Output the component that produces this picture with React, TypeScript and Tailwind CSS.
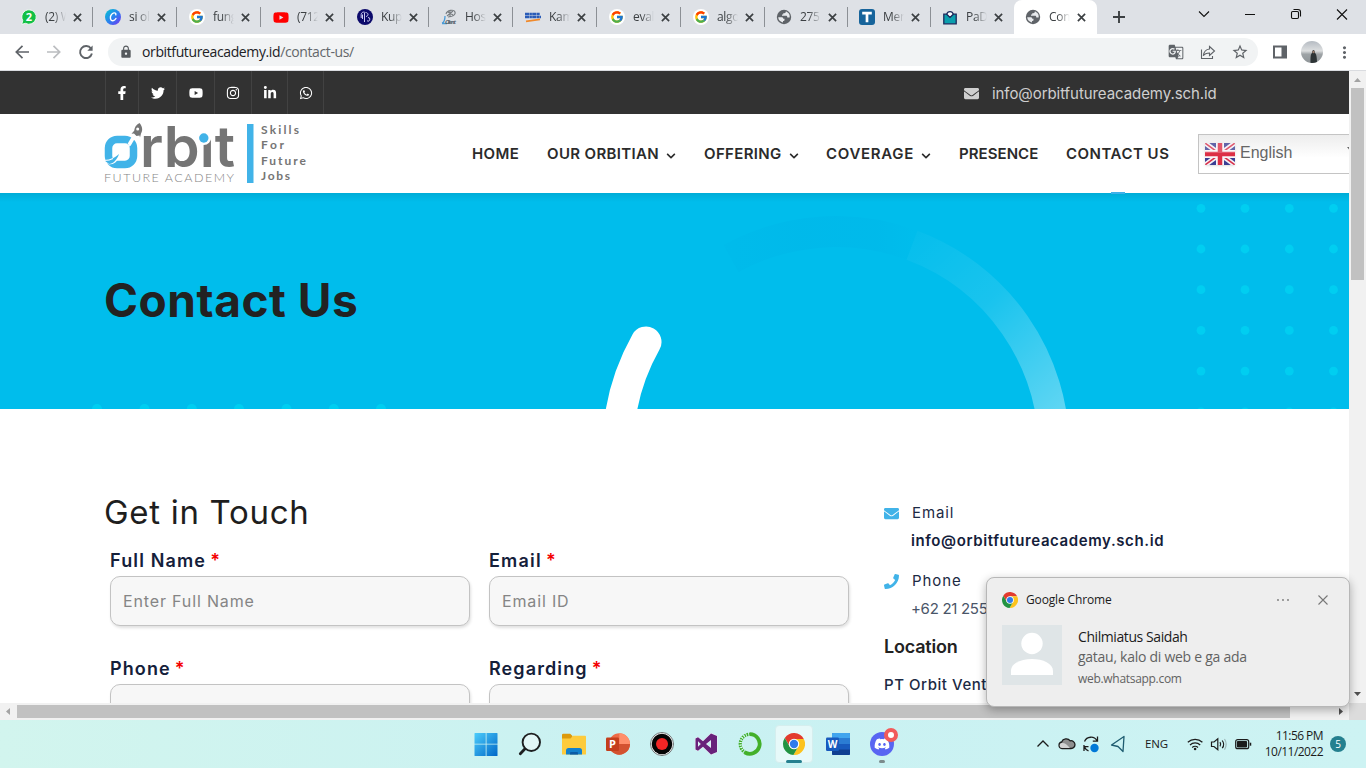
import React from "react";
import {
  FaFacebookF,
  FaTwitter,
  FaYoutube,
  FaInstagram,
  FaLinkedinIn,
  FaWhatsapp,
  FaEnvelope,
  FaPhone,
  FaChevronDown,
  FaDiscord,
} from "react-icons/fa";
import { FcGoogle } from "react-icons/fc";
import { MdLock, MdGTranslate, MdStarBorder, MdMoreVert } from "react-icons/md";

const UI = "font-['Open_Sans','Noto_Sans',sans-serif]";
const SITE = "font-['Inter','Liberation_Sans',sans-serif]";

/* ---------- shared icons ---------- */

function ChromeLogo({ className }: { className: string }) {
  return (
    <svg viewBox="2 2 44 44" className={className}>
      <path fill="#e33b2e" d="M5.55 12.02A22 22 0 0 1 43.6 14H24L15.34 29Z" />
      <path fill="#fcc31e" d="M43.6 14A22 22 0 0 1 22.85 45.97L32.66 29 24 14Z" />
      <path fill="#229342" d="M22.85 45.97A22 22 0 0 1 5.55 12.02L15.34 29H32.66Z" />
      <circle cx="24" cy="24" r="10.5" fill="#fff" />
      <circle cx="24" cy="24" r="8.3" fill="#2f7bea" />
    </svg>
  );
}

function GlobeIcon() {
  return (
    <svg viewBox="0 0 16 16" className="size-4">
      <circle cx="8" cy="8" r="7.2" fill="#5f6368" />
      <path
        d="M2.200 8.200h3.300c1.200 0 1.800.7 1.800 1.600h1.200v1.300c0 .8-.7 1-1.500 1v1.300C4.500 13 2.300 11 2.200 8.200Z"
        fill="#e8eaed"
      />
      <path
        d="M9.800 2.600c0 1.200-.5 1.700-1.500 1.700H7.200v1.300H6v1.200h4c1 0 1.300.6 1.300 1.600h2.300c.6-2.600-1-5-3.800-5.800Z"
        fill="#e8eaed"
      />
    </svg>
  );
}

function GoogleIcon() {
  return (
    <span className="flex size-4 items-center justify-center rounded-full bg-white">
      <FcGoogle size={14} />
    </span>
  );
}

/* ---------- browser tabs ---------- */

const tabs: { label: string; icon: React.ReactNode }[] = [
  {
    label: "(2) WhatsApp",
    icon: (
      <svg viewBox="0 0 16 16" className="size-4">
        <path d="M8 .8a7.200 7.200 0 1 1-3.500 13.500L.8 15.300l1-3.700A7.200 7.200 0 0 1 8 .8Z" fill="#12bf45" stroke="#fff" strokeWidth=".8" />
        <text x="8" y="12" textAnchor="middle" fontSize="11" fontWeight="700" fill="#fff">2</text>
      </svg>
    ),
  },
  {
    label: "si olive",
    icon: (
      <svg viewBox="0 0 16 16" className="size-4">
        <defs>
          <linearGradient id="canva" x1="0" y1="0" x2="1" y2="1">
            <stop offset="0" stopColor="#04c6d0" />
            <stop offset=".55" stopColor="#2e7df0" />
            <stop offset="1" stopColor="#7a2ff0" />
          </linearGradient>
        </defs>
        <circle cx="8" cy="8" r="8" fill="url(#canva)" />
        <path d="M10.800 5.800c.3-1.400-.6-2.100-1.800-1.900-2.300.4-3.900 3-3.600 5.300.2 1.700 1.200 2.700 2.600 2.500 1.200-.1 2.300-1 2.900-2.200" fill="none" stroke="#fff" strokeWidth="1.400" strokeLinecap="round" />
      </svg>
    ),
  },
  { label: "fungsi", icon: <GoogleIcon /> },
  { label: "(712) You", icon: <FaYoutube size={17} className="text-[#ff0000]" /> },
  {
    label: "Kupas",
    icon: (
      <svg viewBox="0 0 16 16" className="size-4">
        <circle cx="8" cy="8" r="8" fill="#0c0a6b" />
        <path d="M5.500 10V5.500M7.500 3.500v9.500M4.200 9V5.500C4.200 3.500 6 3 7.500 3M8.500 3.500c3 0 3.500 3.500 .5 4M11 8.500a1.800 1.800 0 1 1-1 3.300" fill="none" stroke="#c8c9ef" strokeWidth="1" />
      </svg>
    ),
  },
  {
    label: "Hospital",
    icon: (
      <svg viewBox="0 0 16 16" className="size-4">
        <path d="M5 5c1-4 8-5 9-2s-3 5-7 5M7 3l5 3M6 7l6-5M9 2v6" fill="none" stroke="#777c80" strokeWidth="1.100" />
        <path d="M1 14c3-1 3-5 3-7M1 14.500h5" fill="none" stroke="#4a9bd8" strokeWidth="1.300" />
        <text x="4" y="14.500" fontSize="6" fontStyle="italic" fontWeight="700" fill="#55606a" textLength="11">Client</text>
      </svg>
    ),
  },
  {
    label: "Kampus",
    icon: (
      <svg viewBox="0 0 16 16" className="size-4">
        <path d="M0 5h15M0 8h16" stroke="#2a5cb8" strokeWidth="2.400" strokeDasharray="4 .4 2.500 .3" />
        <path d="M1 12.300 15 10.300" stroke="#f08a2c" strokeWidth="1.800" />
      </svg>
    ),
  },
  { label: "evaluasi", icon: <GoogleIcon /> },
  { label: "algoritma", icon: <GoogleIcon /> },
  { label: "275 0", icon: <GlobeIcon /> },
  {
    label: "Menu",
    icon: (
      <svg viewBox="0 0 16 16" className="size-4">
        <rect width="16" height="16" rx="3" fill="#17649b" />
        <path d="M3.200 4.200h9.600M8 4v9.200" stroke="#fff" strokeWidth="2.700" />
      </svg>
    ),
  },
  {
    label: "PaDi",
    icon: (
      <svg viewBox="0 0 16 16" className="size-4">
        <path d="M1.800 5.200h3L8 8.200l3.200-3h3v9.600H1.800Z" fill="#0b9fae" stroke="#1b2a5c" strokeWidth="1.300" />
        <path d="M4.800 5.200a3.300 3.300 0 0 1 6.400 0L8 8.400Z" fill="#fff" stroke="#1b2a5c" strokeWidth="1.300" />
      </svg>
    ),
  },
  { label: "Contact", icon: <GlobeIcon /> },
];

function TabStrip() {
  return (
    <div className={`flex h-[34px] shrink-0 bg-[#dee1e6] pl-[9px] ${UI}`}>
      {tabs.map((t, i) => {
        const active = i === tabs.length - 1;
        const sep = i < tabs.length - 2;
        return (
          <div
            key={i}
            className={`relative flex h-[34px] shrink-0 items-center ${i < 9 ? "w-[84px] pl-3" : "w-[83px] pl-[11px]"} ${active ? "rounded-t-lg bg-white" : ""}`}
          >
            <span className="flex w-4 shrink-0 justify-center">{t.icon}</span>
            <span className="ml-2 w-[21px] overflow-hidden text-[12px] tracking-[-0.3px] whitespace-nowrap text-[#3c4043] [mask-image:linear-gradient(90deg,#000_40%,transparent)]">
              {t.label}
            </span>
            <svg viewBox="0 0 10 10" className="ml-[7px] size-[9px]">
              <path d="M1 1l8 8M9 1 1 9" stroke="#3c4043" strokeWidth="1.900" />
            </svg>
            {sep && <span className="absolute top-[7px] right-0 h-5 w-px bg-[#8c9095]" />}
          </div>
        );
      })}
      <svg viewBox="0 0 14 14" className="mt-[10px] ml-[15px] size-[14px]">
        <path d="M7 1v12M1 7h12" stroke="#3c4043" strokeWidth="1.900" />
      </svg>
      <svg viewBox="0 0 170 20" className="mt-[5px] ml-[67px] h-5 w-[170px]" fill="none" stroke="#111" strokeWidth="1.100">
        <path d="M6 6.500 11 11.500 16 6.500M52 9.500h10" />
        <rect x="98.500" y="6.500" width="7" height="7" rx="1.200" />
        <path d="M100.500 4.500h4.500a2.500 2.500 0 0 1 2.500 2.500v4.500" />
        <path d="M144 4.500l10 10M154 4.500l-10 10" />
      </svg>
    </div>
  );
}

function Toolbar() {
  return (
    <div className={`flex h-[37px] shrink-0 items-center border-b border-[#dadce0] bg-white ${UI}`}>
      <svg viewBox="0 0 96 20" className="h-5 w-24 shrink-0" fill="none" strokeWidth="1.700">
        <path d="M29 10H16.500M22.500 3.800 16.300 10l6.200 6.200" stroke="#5f6368" />
        <path d="M47 10h12.500M53.500 3.800 59.700 10l-6.200 6.200" stroke="#bbbdc0" />
        <path d="M91 6.600a6 6 0 1 0 .9 4.900" stroke="#5f6368" strokeWidth="1.900" />
        <path d="M92.600 3.500v5.300h-5.300Z" fill="#5f6368" />
      </svg>
      <div className="ml-3 flex h-7 w-[1150px] shrink-0 items-center rounded-full bg-[#f1f3f4] pr-[9px] pl-[11px]">
        <MdLock size={14} className="text-[#55595d]" />
        <span className="ml-[9px] text-[14px] leading-5 tracking-[-0.38px] text-[#202124]">
          orbitfutureacademy.id<span className="text-[#63676b]">/contact-us/</span>
        </span>
        <MdGTranslate size={16} className="ml-auto text-[#5f6368]" />
        <svg viewBox="0 0 16 16" className="ml-[16px] size-4" fill="none" stroke="#5f6368" strokeWidth="1.100">
          <path d="M1.500 5.500v9h11v-2.500" />
          <path d="M9.500 2.500 14.500 7l-5 4.500V9c-3 0-5 .8-6.200 2.800C3.800 8 6 5.400 9.500 5Z" />
        </svg>
        <MdStarBorder size={18} className="ml-[15px] text-[#5f6368]" />
      </div>
      <svg viewBox="0 0 14 14" className="ml-[15px] size-[14px]">
        <path d="M0 .5h14v13H0ZM2 2.500v9h6.500v-9Z" fill="#5f6368" fillRule="evenodd" />
      </svg>
      <svg viewBox="0 0 22 22" className="ml-[14px] size-[22px]">
        <defs>
          <linearGradient id="avatarSky" x1="0" y1="0" x2="0" y2="1">
            <stop offset="0" stopColor="#b5bbc2" />
            <stop offset=".45" stopColor="#dddfe0" />
            <stop offset=".6" stopColor="#9ea3a6" />
            <stop offset="1" stopColor="#8f9598" />
          </linearGradient>
          <clipPath id="avatarClip"><circle cx="11" cy="11" r="11" /></clipPath>
        </defs>
        <g clipPath="url(#avatarClip)">
          <rect width="22" height="22" fill="url(#avatarSky)" />
          <path d="M9.500 22c0-6 0-9 1.500-10 0-4 3-4 3 0 1.500 1 2 5 2 10Z" fill="#2d3436" />
          <circle cx="12.500" cy="11" r="1.200" fill="#9b7e70" />
        </g>
      </svg>
      <MdMoreVert size={19} className="ml-[12px] text-[#5f6368]" />
    </div>
  );
}

/* ---------- site ---------- */

const socials = [
  { Icon: FaFacebookF, box: "w-[33px]" },
  { Icon: FaTwitter, box: "w-[38px]" },
  { Icon: FaYoutube, box: "w-[38px]" },
  { Icon: FaInstagram, box: "w-[37px]" },
  { Icon: FaLinkedinIn, box: "w-[36px]" },
  { Icon: FaWhatsapp, box: "w-[36px]" },
];

function TopBar() {
  return (
    <div className="flex h-[43px] shrink-0 items-center bg-[#323232] pl-[105px]">
      {socials.map(({ Icon, box }, i) => (
        <span key={i} className={`flex h-full items-center justify-center border-l border-[#424242] text-white ${box}`}>
          <Icon size={14} />
        </span>
      ))}
      <span className="h-full w-px bg-[#424242]" />
      <FaEnvelope size={15} className="mt-px ml-[640px] text-[#cfcfcf]" />
      <span className="ml-[13px] pt-[3px] text-[15px] tracking-[-0.07px] text-[#cfcfcf]">info@orbitfutureacademy.sch.id</span>
    </div>
  );
}

function Logo() {
  return (
    <svg viewBox="0 0 204 64" className="-ml-px h-16 w-[204px] shrink-0">
      <rect x="4.500" y="17.500" width="25" height="25" rx="8.500" fill="none" stroke="#41b3e8" strokeWidth="7.500" />
      <path d="M25 23 32 11" stroke="#fff" strokeWidth="3.500" />
      <path d="M26 22c-2 4-4 6-6 8" stroke="#fff" strokeWidth="1.500" fill="none" />
      <path d="M0 39.500c7 0 10-2 16-7-2 7-6 10-11 10Z" fill="#fff" />
      <path d="M0 38c7 0 10-2 15-6-2 6-6 10-10 10Z" fill="#41b3e8" />
      <path d="M0 38.500c4 0 7-.8 9-2" stroke="#fff" strokeWidth="1.200" fill="none" />
      <path d="M35.500 1c-3.500 1.500-5 4.500-5.300 7.800l-2.700 3 2.500-.3L32.500 14l3-.5.500 2 1-4c2-3 1.500-7-1.500-10.500Z" fill="#757575" />
      <circle cx="33.700" cy="7" r="1.500" fill="#fff" />
      <text x="36" y="45" fontSize="57" fontWeight="600" fontFamily="Inter" fill="#757575" textLength="95" lengthAdjust="spacingAndGlyphs">rbit</text>
      <rect x="90" y="0" width="18" height="12" fill="#fff" />
      <circle cx="99.800" cy="15.500" r="7.500" fill="#fff" />
      <circle cx="99.800" cy="16" r="4.700" fill="#41b3e8" />
      <text x="0" y="60" fontSize="12.500" fontWeight="300" fontFamily="Lato" fill="#858585" textLength="130">FUTURE ACADEMY</text>
      <rect x="143" y="2" width="6.500" height="59" fill="#41b3e8" />
      <g fontSize="12" fontFamily="Lato" fontWeight="700" fill="#757575">
        <text x="157" y="12" textLength="38">Skills</text>
        <text x="157" y="27" textLength="23">For</text>
        <text x="157" y="43" textLength="45">Future</text>
        <text x="157" y="58" textLength="29">Jobs</text>
      </g>
    </svg>
  );
}

const nav = [
  { label: "HOME", box: "w-[75px]", track: "tracking-[0.4px]", menu: false },
  { label: "OUR ORBITIAN", box: "w-[157px]", track: "tracking-[0.35px]", menu: true },
  { label: "OFFERING", box: "w-[122px]", track: "tracking-[0.35px]", menu: true },
  { label: "COVERAGE", box: "w-[133px]", track: "tracking-[0.7px]", menu: true },
  { label: "PRESENCE", box: "w-[107px]", track: "tracking-[0.05px]", menu: false },
  { label: "CONTACT US", box: "w-[132px]", track: "tracking-[0.5px]", menu: false },
];

function Flag() {
  return (
    <svg viewBox="0 0 30 22" className="h-[22px] w-[30px] shrink-0 rounded-[1px] shadow-sm">
      <rect width="30" height="22" fill="#3b3f94" />
      <path d="M0 0 30 22M30 0 0 22" stroke="#f4f1f6" strokeWidth="5" />
      <path d="M0 0 30 22M30 0 0 22" stroke="#d8304a" strokeWidth="1.500" />
      <path d="M15 0v22M0 11h30" stroke="#f8f5f8" strokeWidth="8" />
      <path d="M15 0v22M0 11h30" stroke="#dc2e45" strokeWidth="4.500" />
      <rect width="30" height="10" fill="#fff" opacity=".2" />
    </svg>
  );
}

function Header() {
  return (
    <div className="flex h-[79px] shrink-0 items-center bg-white pl-[105px]">
      <Logo />
      <nav className="ml-[164px] flex">
        {nav.map((n) => (
          <span key={n.label} className={`relative flex h-[79px] items-center pt-[2px] text-[15px] font-semibold whitespace-nowrap text-[#2b2b2b] ${n.box}`}>
            <span className={n.track}>{n.label}</span>
            {n.menu && <FaChevronDown size={10} className="mt-[2px] ml-[7px]" />}
            {n.label === "CONTACT US" && <span className="absolute bottom-[-1px] left-[45px] z-10 h-[2px] w-[14px] bg-[#3fb1ea]" />}
          </span>
        ))}
      </nav>
      <div className="flex h-10 flex-1 items-center overflow-hidden border border-r-0 border-[#c4c4c4] bg-linear-to-b from-[#ededed] to-white to-60% pl-[6px]">
        <Flag />
        <span className="ml-[5px] pb-[2px] font-['Liberation_Sans',Arial,sans-serif] text-[16px] text-[#666]">English</span>
        <svg viewBox="0 0 8 5" className="mr-[-6px] mb-2 ml-auto h-[5px] w-2 shrink-0"><path d="M0 0h8L4 5Z" fill="#666" /></svg>
      </div>
    </div>
  );
}

const dotX = [1201, 1245, 1289.3, 1333.5];
const dotY = [15.3, 56, 96.7, 137.4, 178.1, 218.8];
const lowDotX = [97, 144.5, 191.8, 239, 286.5, 333.8, 381];

function Hero() {
  return (
    <div className="relative h-[216px] shrink-0 overflow-hidden bg-[#00bdec]">
      <svg viewBox="0 0 1349 216" className="absolute inset-0 h-full w-full">
        <defs>
          <linearGradient id="ring" gradientUnits="userSpaceOnUse" x1="905" y1="45" x2="1060" y2="216">
            <stop offset="0" stopColor="#fff" stopOpacity=".02" />
            <stop offset=".45" stopColor="#fff" stopOpacity=".1" />
            <stop offset="1" stopColor="#fff" stopOpacity=".37" />
          </linearGradient>
          <linearGradient id="ringDark" gradientUnits="userSpaceOnUse" x1="725" y1="0" x2="915" y2="0">
            <stop offset="0" stopColor="#00b7e9" stopOpacity=".3" />
            <stop offset=".4" stopColor="#00b7e9" stopOpacity=".6" />
            <stop offset=".8" stopColor="#00b7e9" stopOpacity=".5" />
            <stop offset="1" stopColor="#00b7e9" stopOpacity="0" />
          </linearGradient>
          <linearGradient id="topShade" x1="0" y1="0" x2="0" y2="1">
            <stop offset="0" stopColor="#000" stopOpacity=".09" />
            <stop offset="1" stopColor="#000" stopOpacity="0" />
          </linearGradient>
        </defs>
        <path d="M731 65.600A218 218 0 0 1 912 52.300" fill="none" stroke="url(#ringDark)" strokeWidth="31" />
        <path d="M912 52.300A218 218 0 0 1 1054 256.500" fill="none" stroke="url(#ring)" strokeWidth="31" />
        <path d="M618 256.500A218 218 0 0 1 646 149" fill="none" stroke="#fff" strokeWidth="31" strokeLinecap="round" />
        {dotY.map((y) => dotX.map((x) => <circle key={`${x}-${y}`} cx={x} cy={y} r="4.400" fill="#00cef1" />))}
        {lowDotX.map((x) => <circle key={x} cx={x} cy="216" r="5" fill="#00cef1" />)}
        <rect width="1349" height="9" fill="url(#topShade)" />
      </svg>
      <h1 className="relative pt-[80px] pl-[104px] text-[46px] leading-[54px] font-bold tracking-[0.55px] text-[#222]">Contact Us</h1>
    </div>
  );
}

function Field({ label, placeholder, track }: { label: string; placeholder: string; track: string }) {
  return (
    <div className="w-[360px]">
      <div className="flex h-[27px] items-center pb-[4px] text-[18px] font-semibold text-[#14203a]">
        <span className={track}>{label}</span>
        <span className="ml-[4px] text-[#f40000]">*</span>
      </div>
      <div className="flex h-[50px] items-center rounded-[10px] border border-[#c3c3c3] bg-[#f7f7f7] pl-3 text-[16px] tracking-[0.85px] text-[#858585] shadow-[1px_2px_3px_rgba(0,0,0,0.12)]">
        {placeholder}
      </div>
    </div>
  );
}

function ContactBody() {
  return (
    <div className="flex flex-1 overflow-hidden bg-white pl-[104px]">
      <div className="w-[780px] shrink-0 pt-[82px]">
        <h2 className="text-[33px] leading-[42px] tracking-[0.7px] text-[#1e1e1e]">Get in Touch</h2>
        <div className="mt-[16px] ml-[6px] grid grid-cols-[360px_360px] gap-x-[19px] gap-y-[31px]">
          <Field label="Full Name" placeholder="Enter Full Name" track="tracking-[1.15px]" />
          <Field label="Email" placeholder="Email ID" track="tracking-[1.2px]" />
          <Field label="Phone" placeholder="" track="tracking-[1.1px]" />
          <Field label="Regarding" placeholder="" track="tracking-[1.1px]" />
        </div>
      </div>
      <div className="pt-[90px] text-[15px] leading-[28px] whitespace-nowrap text-[#1c2a44]">
        <div className="flex items-center tracking-[0.9px]">
          <FaEnvelope size={15} className="mr-[13px] text-[#41b3e8]" />
          Email
        </div>
        <div className="pl-[27px] font-semibold tracking-[0.6px] text-[#14203a]">info@orbitfutureacademy.sch.id</div>
        <div className="mt-3 flex items-center tracking-[0.9px]">
          <FaPhone size={15} className="mr-[13px] text-[#41b3e8]" />
          Phone
        </div>
        <div className="pl-[27px] tracking-[-0.3px] text-[#4a5568]">+62 21 2555 8558</div>
        <div className="mt-[10px] text-[18px] font-semibold tracking-[-0.2px] text-[#222]">Location</div>
        <div className="mt-[10px] font-medium tracking-[0.55px]">PT Orbit Ventura Indonesia</div>
      </div>
    </div>
  );
}

/* ---------- scroll bars ---------- */

function VerticalScroll() {
  return (
    <div className="flex w-[17px] shrink-0 flex-col items-center bg-[#f1f1f1]">
      <svg viewBox="0 0 17 17" className="size-[17px]"><path d="M5 11h7L8.500 7Z" fill="#a3a3a3" /></svg>
      <div className="h-[192px] w-[13px] bg-[#c1c1c1]" />
      <svg viewBox="0 0 17 17" className="mt-auto size-[17px]"><path d="M5 6h7l-3.500 4Z" fill="#505050" /></svg>
    </div>
  );
}

function HorizontalScroll() {
  return (
    <div className="flex h-[17px] shrink-0 items-center bg-[#f1f1f1]">
      <svg viewBox="0 0 17 17" className="size-[17px]"><path d="M10 5v7L6 8.500Z" fill="#a3a3a3" /></svg>
      <div className="h-[13px] w-[1273px] bg-[#c1c1c1]" />
      <svg viewBox="0 0 17 17" className="ml-[42px] size-[17px]"><path d="M7 5v7l4-3.500Z" fill="#505050" /></svg>
      <div className="size-[17px] bg-[#dcdcdc]" />
    </div>
  );
}

/* ---------- notification ---------- */

function Toast() {
  return (
    <div className={`absolute top-[577px] left-[986px] z-20 h-[130px] w-[364px] rounded-lg border border-[#b7b7b7] bg-[#eee] shadow-[0_3px_10px_rgba(0,0,0,0.3)] ${UI}`}>
      <div className="flex h-[44px] items-center pl-[15px]">
        <ChromeLogo className="size-4" />
        <span className="ml-2 text-[12px] tracking-[-0.15px] text-[#1b1b1b]">Google Chrome</span>
        <svg viewBox="0 0 60 12" className="mr-[17px] ml-auto h-3 w-[60px]">
          <circle cx="6" cy="6" r=".9" fill="#777" /><circle cx="11" cy="6" r=".9" fill="#777" /><circle cx="16" cy="6" r=".9" fill="#777" />
          <path d="M46.500 1.500l9 9M55.500 1.500l-9 9" stroke="#777" strokeWidth="1.100" />
        </svg>
      </div>
      <div className="flex pt-[3px] pl-[15px]">
        <svg viewBox="0 0 60 60" className="size-[60px] shrink-0">
          <rect width="60" height="60" fill="#dfe5e7" />
          <circle cx="30" cy="18.500" r="10.700" fill="#fff" />
          <path d="M9 50v-4c0-7.500 10-12 21-12s21 4.500 21 12v4Z" fill="#fff" />
        </svg>
        <div className="ml-4 pt-[2px]">
          <div className="text-[14px] leading-[20px] tracking-[-0.42px] text-[#1b1b1b]">Chilmiatus Saidah</div>
          <div className="text-[14px] leading-[19px] tracking-[-0.27px] text-[#626262]">gatau, kalo di web e ga ada</div>
          <div className="mt-[4px] text-[12px] leading-[18px] tracking-[-0.3px] text-[#626262]">web.whatsapp.com</div>
        </div>
      </div>
    </div>
  );
}

/* ---------- taskbar ---------- */

const apps: { name: string; icon: React.ReactNode }[] = [
  {
    name: "start",
    icon: (
      <svg viewBox="0 0 24 24" className="size-6">
        <defs>
          <linearGradient id="win" x1="0" y1="0" x2="1" y2="1"><stop offset="0" stopColor="#4ccdfb" /><stop offset="1" stopColor="#0067c8" /></linearGradient>
        </defs>
        <path d="M.5 1.500A.5.500 0 0 1 1 1h10.700v10.700H.5ZM12.500 1H23a.5.500 0 0 1 .5.500v10.200h-11ZM.5 12.500h11.200V24H1a.5.500 0 0 1-.5-.5ZM12.500 12.500h11v11a.5.500 0 0 1-.5.500H12.500Z" fill="url(#win)" />
      </svg>
    ),
  },
  {
    name: "search",
    icon: (
      <svg viewBox="0 0 24 24" className="size-6" fill="none" stroke="#1d1f20">
        <circle cx="13.300" cy="10.300" r="8.700" strokeWidth="1.900" fill="#e2f7f7" />
        <path d="M6.800 17 2.300 21.700" strokeWidth="2.800" strokeLinecap="round" />
      </svg>
    ),
  },
  {
    name: "files",
    icon: (
      <svg viewBox="0 0 24 24" className="size-6">
        <path d="M0 3a1.200 1.200 0 0 1 1.200-1.200h7L10.500 4v5H0Z" fill="#dc9a0c" />
        <path d="M0 6.500h8.500L11 3.800h12a1 1 0 0 1 1 1V22.500H0Z" fill="#fdcb3c" />
        <path d="M4 22.500v-4a2.500 2.500 0 0 1 2.500-2.500h11a2.500 2.500 0 0 1 2.500 2.500v4Z" fill="#1280cc" />
        <path d="M8 22.500v-1.500a1 1 0 0 1 1-1h6a1 1 0 0 1 1 1v1.500Z" fill="#0a5ba5" />
      </svg>
    ),
  },
  {
    name: "powerpoint",
    icon: (
      <svg viewBox="0 0 24 24" className="size-6">
        <circle cx="13.300" cy="12" r="10.700" fill="#ed6c47" />
        <path d="M13.300 1.300A10.700 10.700 0 0 1 24 12H13.300Z" fill="#ff8f6b" />
        <path d="M2.600 12H24a10.700 10.700 0 0 1-21.400 0Z" fill="#d35230" />
        <rect y="5.500" width="13" height="13.500" rx="1.200" fill="#c43e1c" />
        <text x="6.400" y="16.200" textAnchor="middle" fontSize="11" fontWeight="700" fontFamily="Open Sans" fill="#fff">P</text>
      </svg>
    ),
  },
  {
    name: "recorder",
    icon: (
      <svg viewBox="0 0 24 24" className="size-6">
        <circle cx="12" cy="12" r="11.500" fill="#fff" stroke="#6f7677" strokeWidth="1" />
        <circle cx="12" cy="12" r="10.300" fill="#050505" />
        <circle cx="12" cy="12" r="6" fill="#f22525" />
      </svg>
    ),
  },
  {
    name: "visual studio",
    icon: (
      <svg viewBox="0 0 24 24" className="size-6">
        <path d="m17 1.500 6 2.500v16l-6 2.500-8-7.700-5 3.900-2.500-1.200V6.500L4 5.300l5 3.900ZM17 8l-5 4 5 4ZM4 9.200v5.600L6.800 12Z" fill="#68217a" fillRule="evenodd" stroke="#f3eef8" strokeWidth="1" paintOrder="stroke" />
      </svg>
    ),
  },
  {
    name: "anaconda",
    icon: (
      <svg viewBox="0 0 24 24" className="size-6" fill="none" stroke="#43b02a">
        <path d="M12 2.200a9.800 9.800 0 1 1-5 18.300" strokeWidth="3.800" />
        <path d="M7.500 20.700A9.800 9.800 0 0 1 12 2.200" strokeWidth="3.200" strokeDasharray="1.600 .9" />
        <path d="M5 18A9.600 9.600 0 0 1 8 3" strokeWidth="1.200" strokeDasharray="1 1.500" stroke="#e6fbf5" />
      </svg>
    ),
  },
  { name: "chrome", icon: <ChromeLogo className="size-[22px]" /> },
  {
    name: "word",
    icon: (
      <svg viewBox="0 0 24 24" className="size-6">
        <rect x="6" y="1" width="18" height="22" rx="1.300" fill="#185abd" />
        <path d="M6 6.500V2.300A1.300 1.300 0 0 1 7.300 1h15.400A1.300 1.300 0 0 1 24 2.300v4.200Z" fill="#41a5ee" />
        <path d="M6 6.500h18V12H6Z" fill="#2b7cd3" />
        <path d="M6 17.500h18v4.200a1.300 1.300 0 0 1-1.300 1.300H7.300A1.300 1.300 0 0 1 6 21.700Z" fill="#103f91" />
        <rect y="5.500" width="13" height="13.500" rx="1.200" fill="#185abd" />
        <text x="6.500" y="16" textAnchor="middle" fontSize="10" fontWeight="700" fontFamily="Open Sans" fill="#fff">W</text>
      </svg>
    ),
  },
  {
    name: "discord",
    icon: (
      <span className="flex size-6 items-center justify-center rounded-full bg-[#5865f2] text-white">
        <FaDiscord size={16} />
      </span>
    ),
  },
];

function Taskbar() {
  return (
    <div className={`flex h-12 shrink-0 items-center bg-linear-to-r from-[#d2f5ee] via-[#c9f1f2] to-[#cdf3f3] ${UI}`}>
      <div className="ml-[464px] flex">
        {apps.map((a) => (
          <div key={a.name} className="relative flex h-12 w-11 items-center justify-center">
            {a.name === "chrome" && (
              <>
                <span className="absolute top-[5px] left-[3px] h-[38px] w-[38px] rounded border border-[#d5eeee] bg-[#e6f9f9]" />
                <span className="absolute top-[40px] left-[14px] h-[3px] w-4 rounded-full bg-[#24808f]" />
              </>
            )}
            <span className="relative">{a.icon}</span>
            {a.name === "discord" && (
              <>
                <span className="absolute top-[8px] left-[24px] size-[14px] rounded-full border-4 border-[#f15b5b] bg-white" />
                <span className="absolute top-[40px] left-[19px] h-[3px] w-[6px] rounded-full bg-[#7c8b8c]" />
              </>
            )}
          </div>
        ))}
      </div>
      <svg viewBox="0 0 96 24" className="ml-[132px] h-6 w-24" fill="none" stroke="#1c1c1c" strokeWidth="1.300">
        <path d="M1.500 14.500 7 9l5.500 5.500" />
        <path d="M26 16.500a3.300 3.300 0 0 1-.4-6.500 5 5 0 0 1 8.600-1.200 3.900 3.900 0 1 1 .8 7.700Z" fill="#8f8f8f" />
        <path d="M24.500 11.500c3-1.500 6 .5 9.500 4.500h-8c-2.500 0-3-3-1.500-4.500Z" fill="#d2d2d2" stroke="none" />
        <path d="M48.500 9.500a7 7 0 0 1 12.500-.8M61.500 4.500v4.700h-4.700M48 13v6M47.800 14.700H52.500M48.500 15a6.500 6.500 0 0 0 4 3.800" />
        <circle cx="58.500" cy="16" r="4.200" fill="#0078d7" stroke="none" />
        <path d="M88 4.500 75.500 13l6.500 1.500 5 5Z" stroke="#1e5c70" strokeLinejoin="round" />
      </svg>
      <span className="ml-[13px] text-[11.500px] tracking-[-0.1px] text-[#1b1b1b]">ENG</span>
      <svg viewBox="0 0 66 20" className="ml-[19px] h-5 w-[66px]" fill="none" stroke="#1c1c1c" strokeWidth="1.200">
        <path d="M.8 8.300a10.700 10.700 0 0 1 14.600 0M3 11a7.400 7.400 0 0 1 10.200 0M5.200 13.500a4.200 4.200 0 0 1 5.800 0" />
        <circle cx="8.100" cy="15" r="1.300" fill="#1c1c1c" stroke="none" />
        <path d="M24.500 8v4.500h2.500l3.800 3.300V4.700L27 8ZM33 8.200c.8 1.200.8 3 0 4.200M35.200 6.500c1.800 2.300 1.800 5.400 0 7.700" />
        <path d="M37.500 5c2.200 3 2.200 7.600 0 10.600" stroke="#9cb5b6" />
        <rect x="48.700" y="5.700" width="13" height="9" rx="2" />
        <rect x="50.500" y="7.500" width="9" height="5.400" rx=".5" fill="#1c1c1c" />
        <path d="M63.500 8.700v3" strokeWidth="1.500" />
      </svg>
      <div className="ml-auto text-right text-[12px] leading-4 tracking-[-0.55px] text-[#1b1b1b]">
        <div>11:56 PM</div>
        <div>10/11/2022</div>
      </div>
      <span className="mr-[20px] ml-[7px] flex size-4 items-center justify-center rounded-full bg-[#24808f] text-[10px] text-white">5</span>
    </div>
  );
}

export default function App() {
  return (
    <div className="relative flex h-[768px] w-[1366px] flex-col overflow-hidden bg-white">
      <TabStrip />
      <Toolbar />
      <div className="flex h-[632px] shrink-0">
        <main className={`flex w-[1349px] flex-col overflow-hidden ${SITE}`}>
          <TopBar />
          <Header />
          <Hero />
          <ContactBody />
        </main>
        <VerticalScroll />
      </div>
      <HorizontalScroll />
      <Taskbar />
      <Toast />
    </div>
  );
}
